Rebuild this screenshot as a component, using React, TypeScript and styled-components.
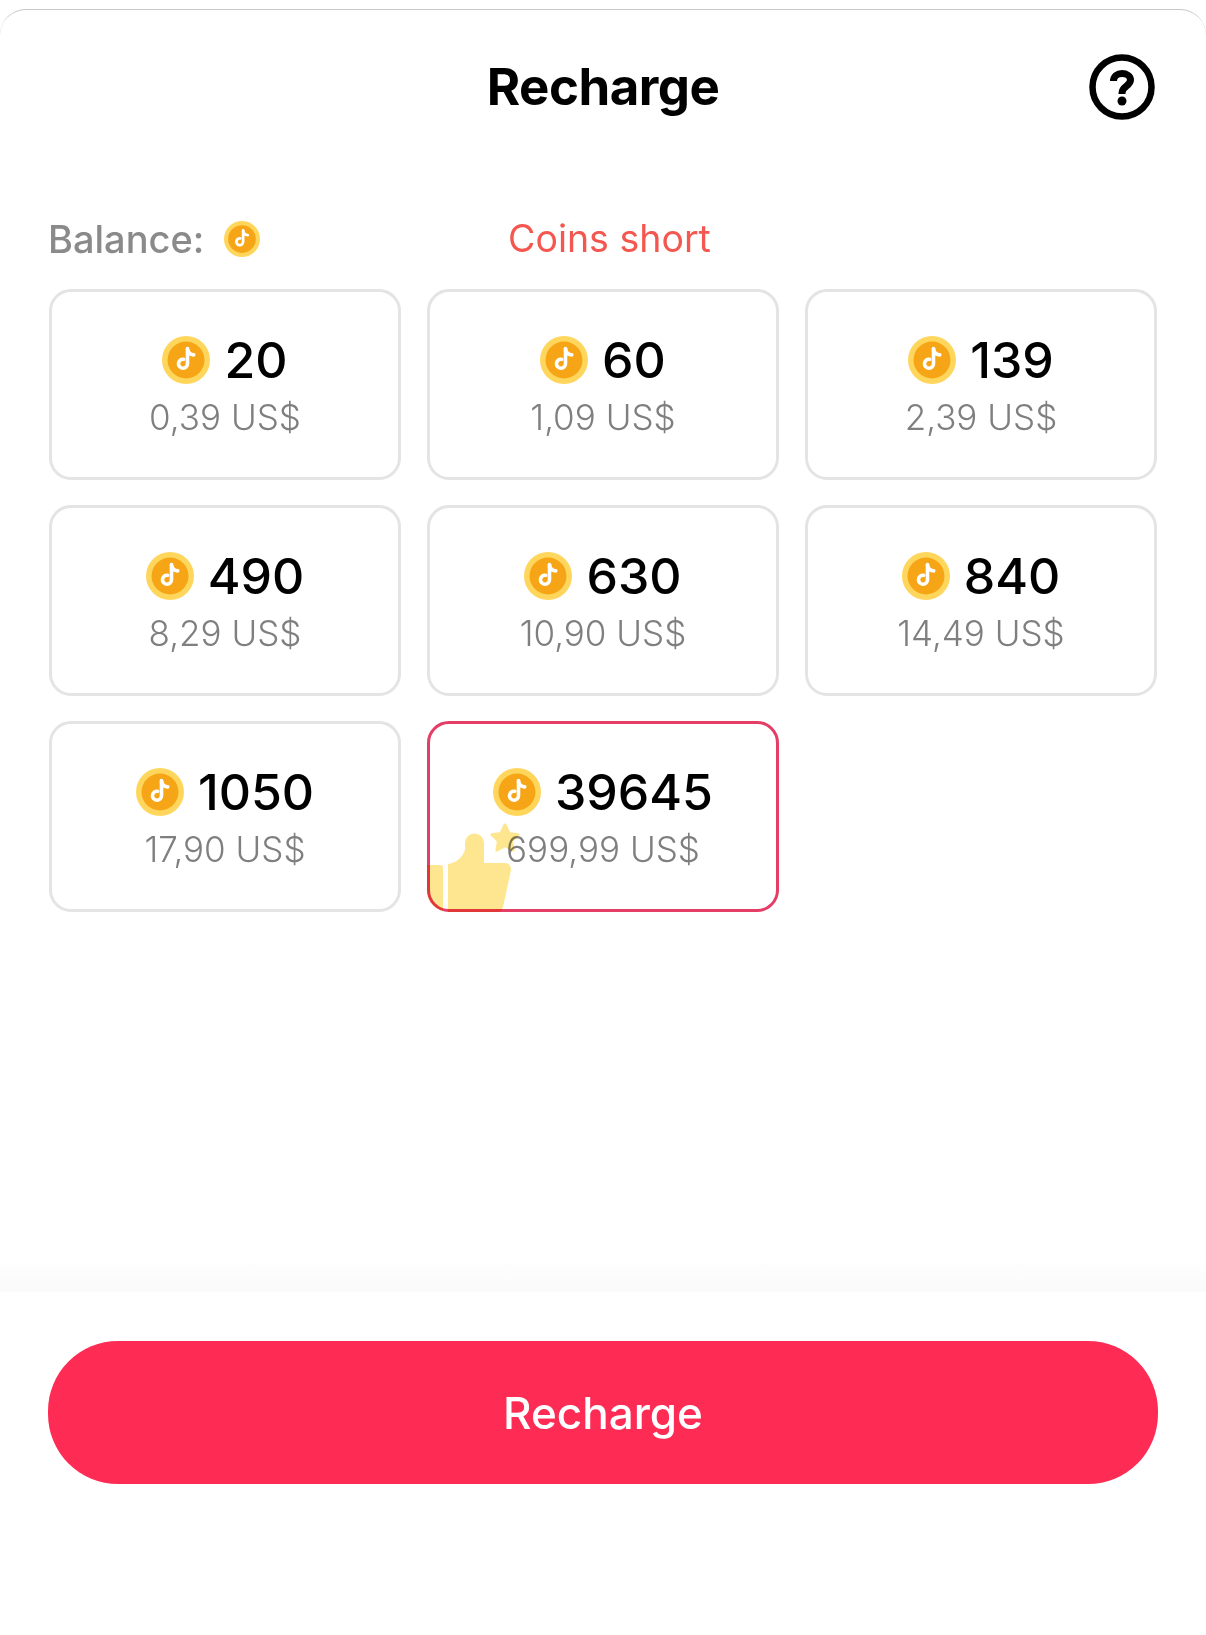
import styled, { createGlobalStyle } from 'styled-components';

const GlobalStyle = createGlobalStyle`
  html, body {
    margin: 0;
    padding: 0;
    background: #fff;
  }
  * {
    box-sizing: border-box;
  }
`;

const Page = styled.div`
  height: 1635px;
  padding-top: 9px;
  background: #fff;
  font-family: 'Inter', 'Liberation Sans', sans-serif;
  overflow: hidden;
`;

const Sheet = styled.div`
  position: relative;
  height: 1626px;
  display: flex;
  flex-direction: column;
  border-top: 1px solid #c8c8c8;
  border-radius: 26px 26px 0 0;
`;

const Header = styled.div`
  position: relative;
  height: 152px;
  display: flex;
  align-items: center;
  justify-content: center;
`;

const Title = styled.h1`
  margin: 0;
  font-size: 51px;
  font-weight: 700;
  letter-spacing: -0.5px;
  color: #000;
`;

const HelpButton = styled.div`
  position: absolute;
  right: 51px;
  top: 44px;
  width: 66px;
  height: 66px;
`;

const BalanceRow = styled.div`
  height: 127px;
  padding: 59px 48px 0;
  display: flex;
  align-items: flex-start;
`;

const BalanceLabel = styled.div`
  width: 212px;
  display: flex;
  align-items: center;
  justify-content: space-between;
  height: 36px;
  font-size: 38px;
  font-weight: 500;
  color: #8a8a8a;
`;

const ShortLabel = styled.div`
  margin-left: 248px;
  height: 36px;
  line-height: 36px;
  font-size: 37.5px;
  color: #f4574f;
`;

const Grid = styled.div`
  display: grid;
  grid-template-columns: repeat(3, 352px);
  grid-auto-rows: 191px;
  column-gap: 26px;
  row-gap: 25px;
  padding-left: 49px;
`;

const Card = styled.div<{ $selected?: boolean }>`
  position: relative;
  display: flex;
  flex-direction: column;
  align-items: center;
  padding-top: 43px;
  border-radius: 22px;
  border: ${props => (props.$selected ? '3px solid #e43d66' : '3px solid #e4e4e4')};
`;

const CoinRow = styled.div`
  display: flex;
  align-items: center;
  gap: 14px;
  height: 50px;
`;

const Amount = styled.span`
  font-size: 50px;
  font-weight: 500;
  line-height: 50px;
  color: #000;
`;

const Price = styled.div`
  margin-top: 9px;
  font-size: 35px;
  font-weight: 300;
  line-height: 46px;
  color: #7f7f7f;
`;

const ThumbClip = styled.div`
  position: absolute;
  inset: -3px;
  overflow: hidden;
  border-radius: 22px;
  mix-blend-mode: multiply;
`;

const Thumb = styled.svg`
  position: absolute;
  left: 0;
  bottom: 0;
  width: 100px;
  height: 90px;
`;

const Spacer = styled.div`
  flex: 1;
`;

const Fade = styled.div`
  height: 34px;
  background: linear-gradient(#fff, #fafafa);
`;

const Footer = styled.div`
  height: 343px;
  padding: 49px 48px 0;
`;

const RechargeButton = styled.button`
  display: block;
  width: 1110px;
  height: 143px;
  border: none;
  border-radius: 70px;
  background: #fe2c55;
  color: #fff;
  font-family: 'Inter', 'Liberation Sans', sans-serif;
  font-size: 44px;
  font-weight: 500;
`;

const Coin = ({ size }: { size: number }) => (
  <svg width={size} height={size} viewBox="0 0 48 48">
    <circle cx="24" cy="24" r="24" fill="#ffd65c" />
    <circle cx="24" cy="24" r="18.5" fill="#f6a517" />
    <path
      d="M25.5 12.5v15.2a4.5 4.5 0 1 1-3.9-4.45"
      fill="none"
      stroke="#fff"
      strokeWidth="3.6"
      strokeLinecap="round"
    />
    <path
      d="M25.5 13c.4 3.4 2.7 5.6 6.2 5.9"
      fill="none"
      stroke="#fff"
      strokeWidth="3.6"
      strokeLinecap="round"
    />
  </svg>
);

const HelpIcon = () => (
  <svg width="66" height="66" viewBox="0 0 66 66">
    <circle cx="33" cy="33" r="29.5" fill="none" stroke="#000" strokeWidth="6.5" />
    <path
      d="M24.5 27c0-5 4-7.500 8.500-7.500s8.500 2.500 8.500 6.500c0 6-8.500 6-8.500 13v1"
      fill="none"
      stroke="#000"
      strokeWidth="7"
    />
    <circle cx="33" cy="47" r="4.5" fill="#000" />
  </svg>
);

const packages = [
  { coins: '20', price: '0,39 US$' },
  { coins: '60', price: '1,09 US$' },
  { coins: '139', price: '2,39 US$' },
  { coins: '490', price: '8,29 US$' },
  { coins: '630', price: '10,90 US$' },
  { coins: '840', price: '14,49 US$' },
  { coins: '1050', price: '17,90 US$' },
  { coins: '39645', price: '699,99 US$', selected: true },
];

export default function App() {
  return (
    <Page>
      <GlobalStyle />
      <Sheet>
        <Header>
          <Title>Recharge</Title>
          <HelpButton>
            <HelpIcon />
          </HelpButton>
        </Header>
        <BalanceRow>
          <BalanceLabel>
            Balance:
            <Coin size={36} />
          </BalanceLabel>
          <ShortLabel>Coins short</ShortLabel>
        </BalanceRow>
        <Grid>
          {packages.map(pack => (
            <Card key={pack.coins} $selected={pack.selected}>
              <CoinRow>
                <Coin size={48} />
                <Amount>{pack.coins}</Amount>
              </CoinRow>
              <Price>{pack.price}</Price>
              {pack.selected && (
                <ThumbClip>
                  <Thumb viewBox="0 0 100 90">
                    <path d="M0 43h13c2 0 3 1 3 3v44H0z" fill="#fde68f" />
                    <path
                      d="M21 42c8-1 14-6 17-14v-7a9.500 9.500 0 0 1 19 0v20h21c4 0 6 3 6 7l-8 37c-1 3-2 5-5 5H21z"
                      fill="#fde68f"
                    />
                    <path
                      d="M78 3l4 8.500 9 1.200-6.500 6.300 1.600 9-8.100-4.300-8.100 4.300 1.600-9-6.500-6.300 9-1.200z"
                      fill="#fde68f"
                      stroke="#fde68f"
                      strokeWidth="3"
                      strokeLinejoin="round"
                    />
                  </Thumb>
                </ThumbClip>
              )}
            </Card>
          ))}
        </Grid>
        <Spacer />
        <Fade />
        <Footer>
          <RechargeButton>Recharge</RechargeButton>
        </Footer>
      </Sheet>
    </Page>
  );
}
